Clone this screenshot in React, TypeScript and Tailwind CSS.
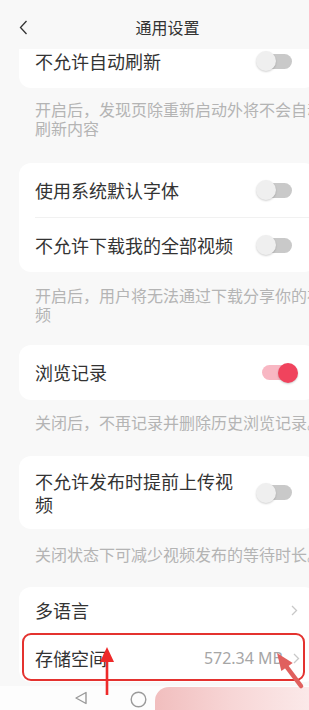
import type { ReactNode } from "react";

const font = { fontFamily: '"Noto Sans CJK SC", "Noto Sans", sans-serif' };

function Toggle({ on }: { on: boolean }) {
  return (
    <div className="relative w-[42px] h-[20px] shrink-0">
      <div
        className={`absolute left-[6px] right-[6px] top-[2.5px] h-[15px] rounded-full ${
          on ? "bg-[#f8b7c3]" : "bg-[#c9c9c9]"
        }`}
      />
      <div
        className={`absolute top-0 w-[20px] h-[20px] rounded-full ${
          on
            ? "right-0 bg-[#f0435d] shadow-[0_1px_2px_rgba(0,0,0,0.2)]"
            : "left-0 bg-[#efefef] shadow-[0_1px_2px_rgba(0,0,0,0.18)]"
        }`}
      />
    </div>
  );
}

function Chevron() {
  return (
    <svg width="7" height="11" viewBox="0 0 7 11" className="shrink-0">
      <path d="M1 1l4.5 4.5L1 10" fill="none" stroke="#c8c8c8" strokeWidth="1.3" />
    </svg>
  );
}

function Row({
  children,
  right,
  className = "h-[54px]",
}: {
  children: ReactNode;
  right: ReactNode;
  className?: string;
}) {
  return (
    <div className={`flex items-center justify-between pl-[16px] pr-[18px] ${className}`}>
      <div className="w-[205px] text-[18px] leading-[23px] text-[#333]">{children}</div>
      {right}
    </div>
  );
}

function Desc({ lines, className }: { lines: string[]; className: string }) {
  return (
    <div className={`pl-[35px] text-[16px] leading-[19px] text-[#b4b4b4] whitespace-nowrap ${className}`}>
      {lines.map((l) => (
        <div key={l}>{l}</div>
      ))}
    </div>
  );
}

export default function App() {
  return (
    <div className="relative w-[309px] h-[710px] overflow-hidden bg-[#f8f8f8]" style={font}>
      <div className="w-[335px] h-full flex flex-col">
        {/* Header */}
        <div className="relative z-10 h-[49px] shrink-0 bg-[#f8f8f8] flex items-center justify-center">
          <svg width="9" height="15" viewBox="0 0 9 15" className="absolute left-[19px] top-[20px]">
            <path d="M7.5 1L1.5 7.5l6 6.5" fill="none" stroke="#333" strokeWidth="1.3" />
          </svg>
          <span className="text-[16px] text-[#333] mt-[5px]">通用设置</span>
        </div>

        <div className="flex-1 overflow-hidden">
          <div className="mx-[19px] mt-[-15px] bg-white rounded-[12px]">
            <Row right={<Toggle on={false} />}>不允许自动刷新</Row>
          </div>
          <Desc
            className="pt-[12px] pb-[25px]"
            lines={["开启后，发现页除重新启动外将不会自动", "刷新内容"]}
          />

          <div className="mx-[19px] bg-white rounded-[12px]">
            <Row right={<Toggle on={false} />}>使用系统默认字体</Row>
            <div className="ml-[16px] h-px bg-[#f1f1f1]" />
            <Row right={<Toggle on={false} />}>不允许下载我的全部视频</Row>
          </div>
          <Desc
            className="pt-[14px] pb-[21px]"
            lines={["开启后，用户将无法通过下载分享你的视", "频"]}
          />

          <div className="mx-[19px] bg-white rounded-[12px]">
            <Row className="h-[55px]" right={<Toggle on />}>
              浏览记录
            </Row>
          </div>
          <Desc className="pt-[13px] pb-[24px]" lines={["关闭后，不再记录并删除历史浏览记录。"]} />

          <div className="mx-[19px] bg-white rounded-[12px]">
            <Row className="h-[73px]" right={<Toggle on={false} />}>
              不允许发布时提前上传视频
            </Row>
          </div>
          <Desc className="pt-[16px] pb-[23px]" lines={["关闭状态下可减少视频发布的等待时长。"]} />

          <div className="mx-[19px] bg-white rounded-[12px]">
            <Row className="h-[47px]" right={<Chevron />}>
              多语言
            </Row>
            <div className="relative">
              <div className="flex items-center justify-between pl-[16px] pr-[16px] h-[48px]">
                <span className="text-[18px] text-[#333]">存储空间</span>
                <div className="flex items-center gap-[10px]">
                  <span className="text-[16px] text-[#a6a6a6]" style={{ fontFamily: '"Noto Sans", sans-serif' }}>
                    572.34 MB
                  </span>
                  <Chevron />
                </div>
              </div>
              <div className="absolute left-[3px] right-[11px] top-[-1px] bottom-[1px] rounded-[9px] border-[2.5px] border-[#e4322f]" />
            </div>
          </div>
        </div>

        {/* System nav bar */}
        <div className="relative h-[24px] shrink-0 bg-[#fdfdfd]">
          <svg width="14" height="14" viewBox="0 0 14 14" className="absolute left-[74px] top-[5px]">
            <path d="M12 1.5L2 7l10 5.5z" fill="none" stroke="#9a9a9a" strokeWidth="1.4" strokeLinejoin="round" />
          </svg>
          <svg width="17" height="17" viewBox="0 0 17 17" className="absolute left-[130px] top-[5px]">
            <circle cx="8.5" cy="8.5" r="7.3" fill="none" stroke="#9a9a9a" strokeWidth="1.4" />
          </svg>
        </div>
      </div>

      {/* Pink highlight band */}
      <div className="absolute left-[155px] top-[687px] right-0 bottom-0 rounded-tl-[14px] bg-gradient-to-r from-[#f1bebe] via-[#f7d6d6] to-[#fbe9e9]" />

      {/* Annotation arrows */}
      <svg width="16" height="50" viewBox="0 0 16 50" className="absolute left-[99px] top-[646px]">
        <path d="M8 1L15 16H1z" fill="#ee2a2a" />
        <rect x="6.7" y="14" width="2.6" height="35" fill="#ee2a2a" />
      </svg>
      <svg width="40" height="45" viewBox="0 0 40 45" className="absolute left-[270px] top-[648px]">
        <path d="M7 5L22.7 15L11.3 23z" fill="#e0605e" />
        <path d="M16 18L31 38" stroke="#e0605e" strokeWidth="4.5" strokeLinecap="round" />
      </svg>
    </div>
  );
}
